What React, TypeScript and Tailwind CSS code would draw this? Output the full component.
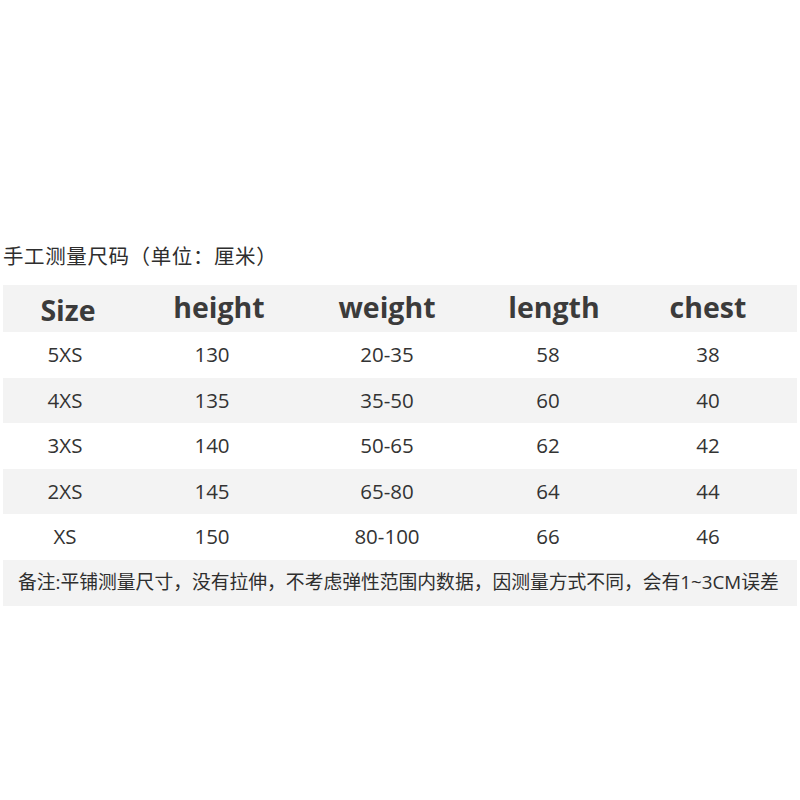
const rows = [
  ['5XS', '130', '20-35', '58', '38'],
  ['4XS', '135', '35-50', '60', '40'],
  ['3XS', '140', '50-65', '62', '42'],
  ['2XS', '145', '65-80', '64', '44'],
  ['XS', '150', '80-100', '66', '46'],
];

const cols = 'grid grid-cols-[124px_170px_180px_142px_178px]';

export default function App() {
  return (
    <div
      className="w-[800px] h-[800px] bg-white text-[#333333]"
      style={{ fontFamily: '"Open Sans", "Noto Sans CJK SC", sans-serif' }}
    >
      <div
        className="pt-[241px] pl-[3px] text-[20.5px] leading-[28px] tracking-[0.6px] text-[#2e2e2e]"
        style={{ fontFamily: '"Noto Sans CJK SC", sans-serif' }}
      >
        手工测量尺码（单位：厘米）
      </div>

      <div className="mt-[16px] mx-[3px]">
        {/* Header */}
        <div className={`${cols} h-[47px] items-center bg-[#f3f3f3] text-[28.5px] font-bold text-[#3b3b3b]`}>
          <div className="text-center pl-[6px] pt-[4px]">Size</div>
          <div className="text-center pl-[14px] pb-[2px]">height</div>
          <div className="text-center pb-[2px]">weight</div>
          <div className="text-center pl-[12px] pb-[2px]">length</div>
          <div className="text-center pb-[2px]">chest</div>
        </div>

        {/* Rows */}
        {rows.map((r, i) => (
          <div
            key={r[0]}
            className={`${cols} h-[45.5px] items-center text-[20.5px] ${i % 2 === 1 ? 'bg-[#f3f3f3]' : 'bg-white'}`}
          >
            {r.map((c, j) => (
              <div key={j} className="text-center">
                {c}
              </div>
            ))}
          </div>
        ))}

        {/* Note */}
        <div className="h-[46px] flex items-center bg-[#f3f3f3] pl-[15px] text-[18.8px] text-[#2e2e2e] whitespace-nowrap">
          备注:平铺测量尺寸，没有拉伸，不考虑弹性范围内数据，因测量方式不同，会有1~3CM误差
        </div>
      </div>
    </div>
  );
}
